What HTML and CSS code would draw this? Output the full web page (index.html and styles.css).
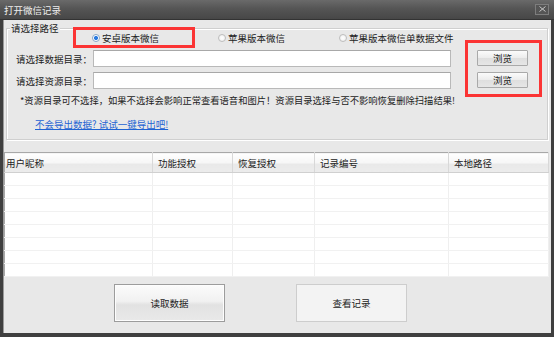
FILE: index.html
```html
<!DOCTYPE html>
<html>
<head>
    <meta charset="utf-8">
    <link rel="stylesheet" href="styles.css">
    <title>打开微信记录</title>
</head>
<body>
<div class="window">
    <div class="titlebar">
        <span class="title">打开微信记录</span>
        <span class="close">
            <svg width="7" height="6" viewBox="0 0 7 6"><path d="M0.5 0.5 L6.5 5.5 M6.5 0.5 L0.5 5.5" stroke="#c8c8c8" stroke-width="1" fill="none"/></svg>
        </span>
    </div>
    <div class="content">
        <div class="group">
            <span class="legend">请选择路径</span>
            <div class="group-body">
                <div class="left">
                    <div class="radios">
                        <label class="radio marked"><span class="dot on"></span>安卓版本微信</label>
                        <label class="radio second"><span class="dot"></span>苹果版本微信</label>
                        <label class="radio"><span class="dot"></span>苹果版本微信单数据文件</label>
                    </div>
                    <div class="field first">
                        <span class="lbl">请选择数据目录：</span>
                        <span class="input"></span>
                    </div>
                    <div class="field">
                        <span class="lbl">请选择资源目录：</span>
                        <span class="input"></span>
                    </div>
                    <p class="note">*资源目录可不选择，如果不选择会影响正常查看语音和图片！资源目录选择与否不影响恢复删除扫描结果!</p>
                    <a class="link" href="#">不会导出数据? 试试一键导出吧!</a>
                </div>
                <div class="browse">
                    <button class="small">浏览</button>
                    <button class="small">浏览</button>
                </div>
            </div>
        </div>

        <table class="records">
            <thead>
                <tr>
                    <th class="c1">用户昵称</th>
                    <th class="c2">功能授权</th>
                    <th class="c3">恢复授权</th>
                    <th class="c4">记录编号</th>
                    <th class="c5">本地路径</th>
                </tr>
            </thead>
            <tbody>
                <tr><td></td><td></td><td></td><td></td><td></td></tr>
                <tr><td></td><td></td><td></td><td></td><td></td></tr>
                <tr><td></td><td></td><td></td><td></td><td></td></tr>
                <tr><td></td><td></td><td></td><td></td><td></td></tr>
                <tr><td></td><td></td><td></td><td></td><td></td></tr>
                <tr><td></td><td></td><td></td><td></td><td></td></tr>
                <tr><td></td><td></td><td></td><td></td><td></td></tr>
                <tr><td></td><td></td><td></td><td></td><td></td></tr>
            </tbody>
        </table>

        <div class="actions">
            <button class="big default">读取数据</button>
            <button class="big">查看记录</button>
        </div>
    </div>
</div>
</body>
</html>
```

FILE: styles.css
```css
* {
    box-sizing: border-box;
    font-family: "Noto Sans CJK SC", "Liberation Sans", sans-serif;
}

body {
    margin: 0;
    padding: 0;
    background-color: #3a3a3a;
}

.window {
    width: 554px;
    height: 337px;
    background-color: #3f3f3f;
    overflow: hidden;
}

.titlebar {
    height: 20px;
    display: flex;
    align-items: center;
    justify-content: space-between;
    padding: 0 5px 0 4px;
    background: linear-gradient(#6a6a6a, #555555 45%, #474747);
    border-bottom: 1px solid #333;
}

.title {
    color: #eeeeee;
    font-size: 9.5px;
    line-height: 12px;
}

.close {
    width: 14px;
    height: 11px;
    margin-top: -1px;
    border: 1px solid #7d7d7d;
    background: #555;
    display: flex;
    align-items: center;
    justify-content: center;
}

.content {
    height: 313px;
    margin: 0 3px;
    background-color: #e8e8e8;
    padding-top: 8px;
    border-left: 1px solid #9a9a9a;
}

/* group box */
.group {
    position: relative;
    margin: 0 3px 0 2px;
    height: 112px;
    border: 1px solid #cfcfcf;
    box-shadow: inset 1px 1px 0 #fff, 1px 1px 0 #fff;
}

.legend {
    position: absolute;
    left: 3px;
    top: -8px;
    padding: 0 1px;
    background-color: #e8e8e8;
    font-size: 9.5px;
    line-height: 14px;
    color: #222;
}

.group-body {
    display: flex;
}

.left {
    width: 458px;
}

.radios {
    display: flex;
    align-items: center;
    margin-top: -2px;
    padding-left: 66px;
    height: 21px;
}

.radio {
    display: flex;
    align-items: center;
    font-size: 9.5px;
    line-height: 12px;
    color: #222;
    height: 21px;
}

.radio.marked {
    width: 122px;
    border: 3px solid #fb3434;
    padding-left: 16px;
}

.radio.second {
    width: 121px;
    margin-left: 23px;
}

.dot {
    width: 8px;
    height: 8px;
    border-radius: 50%;
    border: 1px solid #bdbdbd;
    background: radial-gradient(#ffffff, #ebebeb);
    margin-right: 2px;
}

.dot.on {
    background: radial-gradient(circle, #2a7be0 0, #2a7be0 1.6px, #ffffff 2.4px);
    border-color: #8aa7c8;
}

.field {
    display: flex;
    align-items: center;
    margin-top: 5px;
    padding-left: 9px;
}

.field.first {
    margin-top: 2px;
}

.lbl {
    width: 77px;
    font-size: 9.5px;
    line-height: 12px;
    color: #222;
    white-space: nowrap;
}

.input {
    width: 358px;
    height: 17px;
    background-color: #fff;
    border: 1px solid #b9b9b9;
    border-top-color: #a8a8a8;
}

.note {
    margin: 4px 0 0 0;
    padding-left: 13px;
    font-size: 9.3px;
    line-height: 14px;
    color: #222;
    white-space: nowrap;
}

.link {
    display: inline-block;
    margin: 10px 0 0 28px;
    font-size: 9.5px;
    line-height: 14px;
    color: #1f63d3;
    text-decoration: underline;
}

.browse {
    margin-top: 11px;
    width: 77px;
    height: 57px;
    border: 3px solid #fb3434;
    padding: 7px 0 0 9px;
    display: flex;
    flex-direction: column;
    gap: 6px;
}

button {
    margin: 0;
    color: #222;
    cursor: pointer;
}

.small {
    width: 51px;
    height: 16px;
    padding: 0;
    font-size: 9.5px;
    line-height: 12px;
    border: 1px solid #a9a9a9;
    border-radius: 1px;
    background: linear-gradient(#fbfbfb, #ececec 50%, #dedede 51%, #e6e6e6);
}

/* list view */
.records {
    margin-top: 12px;
    width: 545px;
    border-collapse: collapse;
    table-layout: fixed;
    background-color: #fff;
    border: 1px solid #a8a8a8;
}

.records th {
    height: 20px;
    padding: 0 0 0 5px;
    text-align: left;
    font-weight: normal;
    font-size: 9.5px;
    line-height: 12px;
    color: #222;
    background: linear-gradient(#ffffff, #f6f6f6 50%, #e9e9e9 55%, #ececec);
    border-right: 1px solid #d8d8d8;
    border-bottom: 1px solid #d0d0d0;
}

.records th.c1 { width: 148px; padding-left: 1px; }
.records th.c2 { width: 80px; }
.records th.c3 { width: 82px; }
.records th.c4 { width: 134px; }

.records td {
    height: 13px;
    padding: 0;
    border-right: 1px solid #efefef;
    border-bottom: 1px solid #f1f1f1;
}

.actions {
    display: flex;
    gap: 71px;
    padding: 7px 0 0 110px;
}

.big {
    width: 111px;
    height: 38px;
    font-size: 9.5px;
    line-height: 12px;
    border: 1px solid #cdcdcd;
    background-color: #f3f3f3;
}

.big.default {
    border: 1px solid #9c9c9c;
    box-shadow: inset 0 0 0 1px #fdfdfd;
    background: linear-gradient(#fbfbfb, #f1f1f1 45%, #e2e2e2 55%, #e9e9e9);
}
```
